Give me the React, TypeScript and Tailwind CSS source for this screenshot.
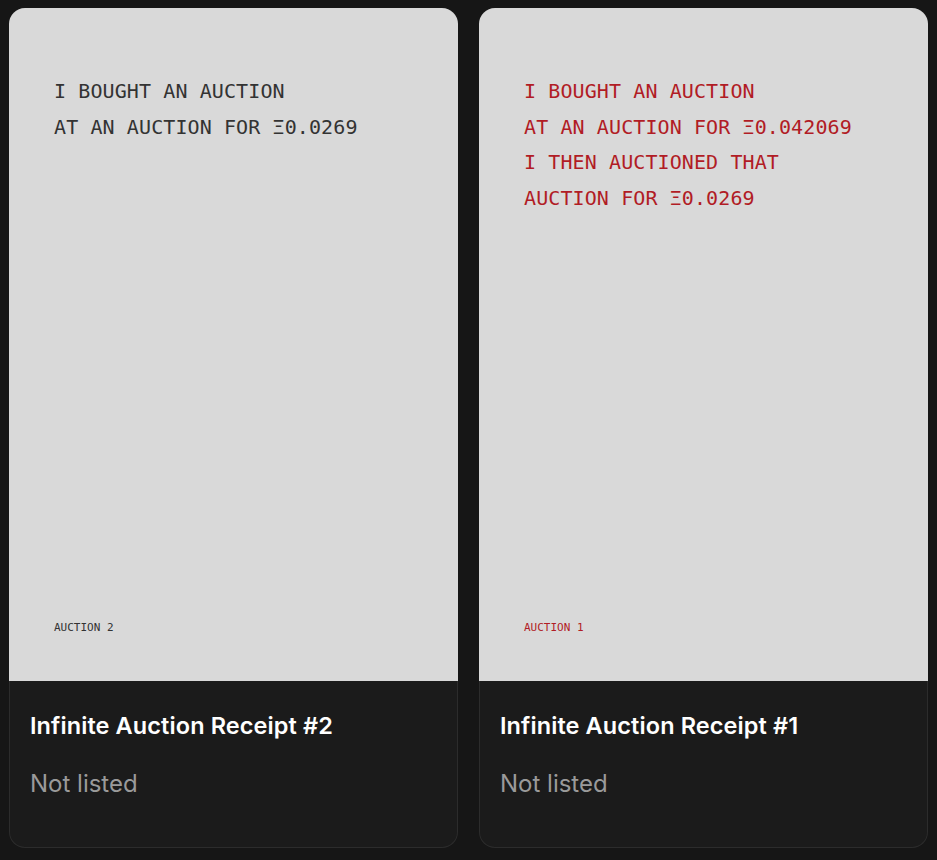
import React from 'react';

type Receipt = {
  title: string;
  lines: string[];
  label: string;
  color: string;
};

const receipts: Receipt[] = [
  {
    title: 'Infinite Auction Receipt #2',
    lines: ['I BOUGHT AN AUCTION', 'AT AN AUCTION FOR Ξ0.0269'],
    label: 'AUCTION 2',
    color: 'text-[#333333]',
  },
  {
    title: 'Infinite Auction Receipt #1',
    lines: [
      'I BOUGHT AN AUCTION',
      'AT AN AUCTION FOR Ξ0.042069',
      'I THEN AUCTIONED THAT',
      'AUCTION FOR Ξ0.0269',
    ],
    label: 'AUCTION 1',
    color: 'text-[#b11c25]',
  },
];

const ReceiptCard: React.FC<{ receipt: Receipt }> = ({ receipt }) => (
  <div className="flex flex-col">
    {/* receipt artwork */}
    <div
      className={`h-[673px] rounded-t-2xl bg-[#d9d9d9] flex flex-col justify-between pl-[45px] pt-[66px] pb-[45px] ${receipt.color}`}
      style={{ fontFamily: '"DejaVu Sans Mono", monospace' }}
    >
      <div className="text-[20px] leading-[35.5px] tracking-[0.1px]">
        {receipt.lines.map((l) => (
          <div key={l}>{l}</div>
        ))}
      </div>
      <div className="text-[11px] leading-4">{receipt.label}</div>
    </div>
    <div
      className="h-[167px] rounded-b-2xl border border-t-0 border-[#2c2c2c] bg-[#1b1b1b] px-[20px] pt-[29px]"
      style={{ fontFamily: 'Inter, sans-serif' }}
    >
      <h3 className="text-white text-[23.5px] font-semibold leading-8 tracking-[0.1px]">{receipt.title}</h3>
      <p className="text-[#9a9a9a] text-[24px] leading-8 mt-[26px]">Not listed</p>
    </div>
  </div>
);

export default function App() {
  return (
    <div className="min-h-[860px] w-[937px] bg-[#161616] pl-[9px] pr-[9px] pt-[8px]">
      <div className="grid grid-cols-2 gap-[21px]">
        {receipts.map((r) => (
          <ReceiptCard key={r.title} receipt={r} />
        ))}
      </div>
    </div>
  );
}
